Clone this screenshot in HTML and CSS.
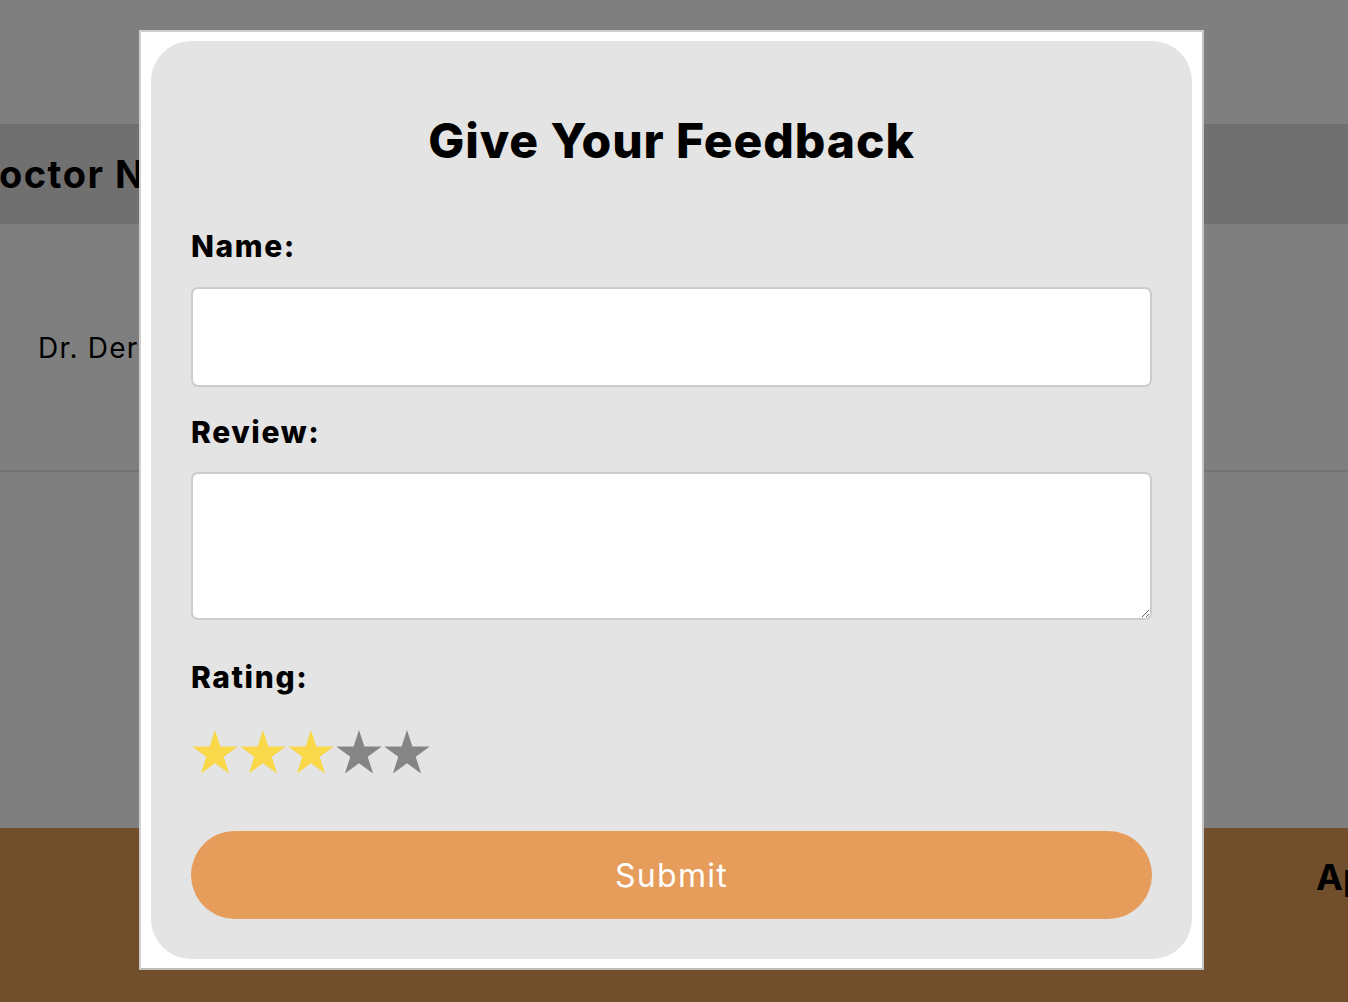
FILE: index.html
```html
<!DOCTYPE html>
<html lang="en">
<head>
<meta charset="utf-8">
<title>Give Your Feedback</title>
<link rel="stylesheet" href="styles.css">
</head>
<body>
<div class="page">
  <div class="top-space"></div>
  <div class="table-head">
    <div class="th">Doctor Name</div>
  </div>
  <div class="table-row">
    <div class="td">Dr. Dermatologist</div>
  </div>
  <div class="gap-space"></div>
  <footer class="footer">
    <div class="footer-title">Appointments</div>
  </footer>
</div>

<div class="overlay">
  <div class="modal">
    <form class="card">
      <h2 class="title">Give Your Feedback</h2>
      <label class="label label-name" for="name">Name:</label>
      <input class="field field-input" id="name" type="text">
      <label class="label label-review" for="review">Review:</label>
      <textarea class="field field-area" id="review"></textarea>
      <div class="label label-rating">Rating:</div>
      <div class="stars">
        <svg class="star star-on" viewBox="0 0 48 44"><polygon points="24,0 29.39,16.58 46.83,16.58 32.72,26.83 38.11,43.42 24,33.17 9.89,43.42 15.28,26.83 1.17,16.58 18.61,16.58"/></svg>
        <svg class="star star-on" viewBox="0 0 48 44"><polygon points="24,0 29.39,16.58 46.83,16.58 32.72,26.83 38.11,43.42 24,33.17 9.89,43.42 15.28,26.83 1.17,16.58 18.61,16.58"/></svg>
        <svg class="star star-on" viewBox="0 0 48 44"><polygon points="24,0 29.39,16.58 46.83,16.58 32.72,26.83 38.11,43.42 24,33.17 9.89,43.42 15.28,26.83 1.17,16.58 18.61,16.58"/></svg>
        <svg class="star star-off" viewBox="0 0 48 44"><polygon points="24,0 29.39,16.58 46.83,16.58 32.72,26.83 38.11,43.42 24,33.17 9.89,43.42 15.28,26.83 1.17,16.58 18.61,16.58"/></svg>
        <svg class="star star-off" viewBox="0 0 48 44"><polygon points="24,0 29.39,16.58 46.83,16.58 32.72,26.83 38.11,43.42 24,33.17 9.89,43.42 15.28,26.83 1.17,16.58 18.61,16.58"/></svg>
      </div>
      <button class="submit" type="button">Submit</button>
    </form>
  </div>
</div>
</body>
</html>
```

FILE: styles.css
```css
* { box-sizing: border-box; }

html, body {
  margin: 0;
  padding: 0;
  height: 100%;
  overflow: hidden;
}

body {
  background: #ffffff;
  font-family: "Inter", "Noto Sans", sans-serif;
  color: #000;
}

.page {
  display: flex;
  flex-direction: column;
  height: 1002px;
}

.top-space { height: 124px; }

.table-head {
  height: 100px;
  background: #e0e0e0;
  display: flex;
  align-items: center;
}

.th {
  margin-left: -30px;
  font-weight: 700;
  font-size: 38px;
  letter-spacing: 1.5px;
  white-space: nowrap;
}

.table-row {
  height: 248px;
  border-bottom: 2px solid #e6e6e6;
  display: flex;
  align-items: center;
}

.td {
  margin-left: 38px;
  margin-top: 2px;
  font-size: 28px;
  letter-spacing: 1.2px;
  white-space: nowrap;
}

.gap-space { height: 356px; }

.footer {
  flex: 1;
  background: #e29e5a;
  display: flex;
  justify-content: flex-end;
  align-items: flex-start;
  overflow: hidden;
}

.footer-title {
  margin-top: 27px;
  margin-right: -200px;
  font-weight: 700;
  font-size: 36px;
  white-space: nowrap;
  width: 232px;
}

.overlay {
  position: fixed;
  inset: 0;
  background: rgba(0, 0, 0, 0.5);
  display: flex;
  align-items: flex-start;
  padding: 30px 0 0 139px;
}

.modal {
  width: 1065px;
  height: 940px;
  background: #ffffff;
  border: 2px solid #cfcfcf;
  border-bottom-color: #bdbdbd;
  border-right-color: #c4c4c4;
  padding: 9px 10px 9px 10px;
}

.card {
  height: 100%;
  background: #e4e4e4;
  border-radius: 40px;
  padding: 0 40px;
  display: flex;
  flex-direction: column;
  margin: 0;
}

.title {
  margin: 0;
  margin-top: 64px;
  height: 72px;
  line-height: 72px;
  font-size: 48px;
  font-weight: 800;
  text-align: center;
  letter-spacing: 0.9px;
}

.label {
  display: block;
  font-size: 30px;
  font-weight: 800;
  letter-spacing: 1.6px;
  line-height: 42px;
  height: 42px;
}

.label-name { margin-top: 48px; }
.label-review { margin-top: 24px; }
.label-rating { margin-top: 36px; }

.field {
  display: block;
  width: 100%;
  background: #ffffff;
  border: 2px solid #cccccc;
  border-radius: 7px;
  font-family: inherit;
  font-size: 20px;
  padding: 10px 16px;
  outline: none;
}

.field-input {
  margin-top: 20px;
  height: 100px;
}

.field-area {
  margin-top: 19px;
  height: 148px;
  resize: vertical;
}

.stars {
  display: flex;
  margin-top: 32px;
  height: 44px;
}

.star {
  width: 48px;
  height: 44px;
  display: block;
}

.star-on { fill: #f9d84a; }
.star-off { fill: #858585; }

.submit {
  margin-top: 57px;
  height: 88px;
  width: 100%;
  border: none;
  border-radius: 44px;
  background: #e69c5a;
  color: #ffffff;
  font-family: inherit;
  font-size: 32px;
  font-weight: 400;
  letter-spacing: 1.3px;
  cursor: pointer;
}
```
